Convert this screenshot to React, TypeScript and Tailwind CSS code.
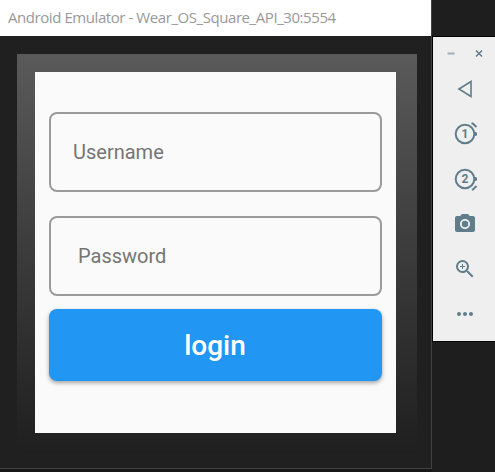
import type { ReactNode } from "react";
import { MdMoreHoriz, MdPhotoCamera, MdZoomIn } from "react-icons/md";

function Field({ label, inset }: { label: string; inset: string }) {
  return (
    <div className={`flex h-20 items-center rounded-lg border-2 border-[#9b9b9b] pb-px text-[20px] text-[#757575] ${inset}`}>
      <span>{label}</span>
    </div>
  );
}

function WatchIcon({ value, tick }: { value: string; tick: string }) {
  return (
    <svg width="28" height="28" viewBox="0 0 28 28" className="shrink-0">
      <circle cx="14" cy="14" r="9.3" fill="none" stroke="#607d8b" strokeWidth="2" />
      <path d="M23 12h2l1 1v2l-1 1h-2z" fill="#607d8b" />
      <path d={tick} fill="none" stroke="#607d8b" strokeWidth="2" />
      <text x="14" y="18.2" textAnchor="middle" fill="#607d8b" className="font-['Roboto',sans-serif] text-[12px] font-bold">
        {value}
      </text>
    </svg>
  );
}

function Tool({ children }: { children: ReactNode }) {
  return <button className="flex h-[45px] w-full items-center justify-center text-[#607d8b]">{children}</button>;
}

export default function App() {
  return (
    <div className="flex h-[472px] w-[495px] items-start overflow-hidden bg-[#1e1e1e]">
      <div className="h-[472px] w-[432px] shrink-0 bg-[#171717]">
        <div className="h-[469px] border-r border-b border-[#424242] bg-[#202020]">
          <header className="flex h-9 items-center bg-white pb-0.5 pl-2 font-['Open_Sans',sans-serif] text-[15px] text-[#999999]">
            <span className="whitespace-nowrap tracking-[-0.43px]">Android Emulator - Wear_OS_Square_API_30:5554</span>
          </header>
          <div className="pt-[18px] pl-[17px]">
            <div className="h-[400px] w-[400px] bg-linear-to-b from-[#5a5a5a] to-[#1f1f1f] p-[18px]">
              <main className="h-[361px] w-[361px] bg-[#fafafa] px-3.5 pt-10 font-['Roboto',sans-serif]">
                <div className="flex w-[333px] flex-col gap-6">
                  <Field label="Username" inset="pl-[22px]" />
                  <Field label="Password" inset="pl-[27px]" />
                </div>
                <button className="mt-[13px] flex h-[72px] w-[333px] items-center justify-center rounded-lg bg-[#2196f3] pt-0.5 pr-px text-[28px] font-medium text-white shadow-[0_2px_4px_rgba(0,0,0,0.35)]">
                  login
                </button>
              </main>
            </div>
          </div>
        </div>
      </div>
      <aside className="mt-9 h-[306px] w-[63px] shrink-0 border-y border-l border-black bg-[#efefef] pl-0.5">
        <div className="flex h-[29px] items-center justify-center pt-[5px]">
          <svg width="38" height="10" viewBox="0 0 38 10" fill="none">
            <path d="M1.5 4.5h7" stroke="#9db0b9" strokeWidth="2" />
            <path d="M30 1.5l6 6M36 1.5l-6 6" stroke="#607d8b" strokeWidth="1.5" />
          </svg>
        </div>
        <Tool>
          <svg width="24" height="24" viewBox="0 0 24 24">
            <path d="M6 12L18 4.5v15z" fill="none" stroke="#607d8b" strokeWidth="1.6" />
          </svg>
        </Tool>
        <Tool><WatchIcon value="1" tick="M20.5 3.3l1.5.4L25.5 7" /></Tool>
        <Tool><WatchIcon value="2" tick="M20.8 24.8l1.2-.4L25.5 21" /></Tool>
        <Tool><MdPhotoCamera size={24} /></Tool>
        <Tool><MdZoomIn size={24} /></Tool>
        <Tool><MdMoreHoriz size={24} /></Tool>
      </aside>
    </div>
  );
}
